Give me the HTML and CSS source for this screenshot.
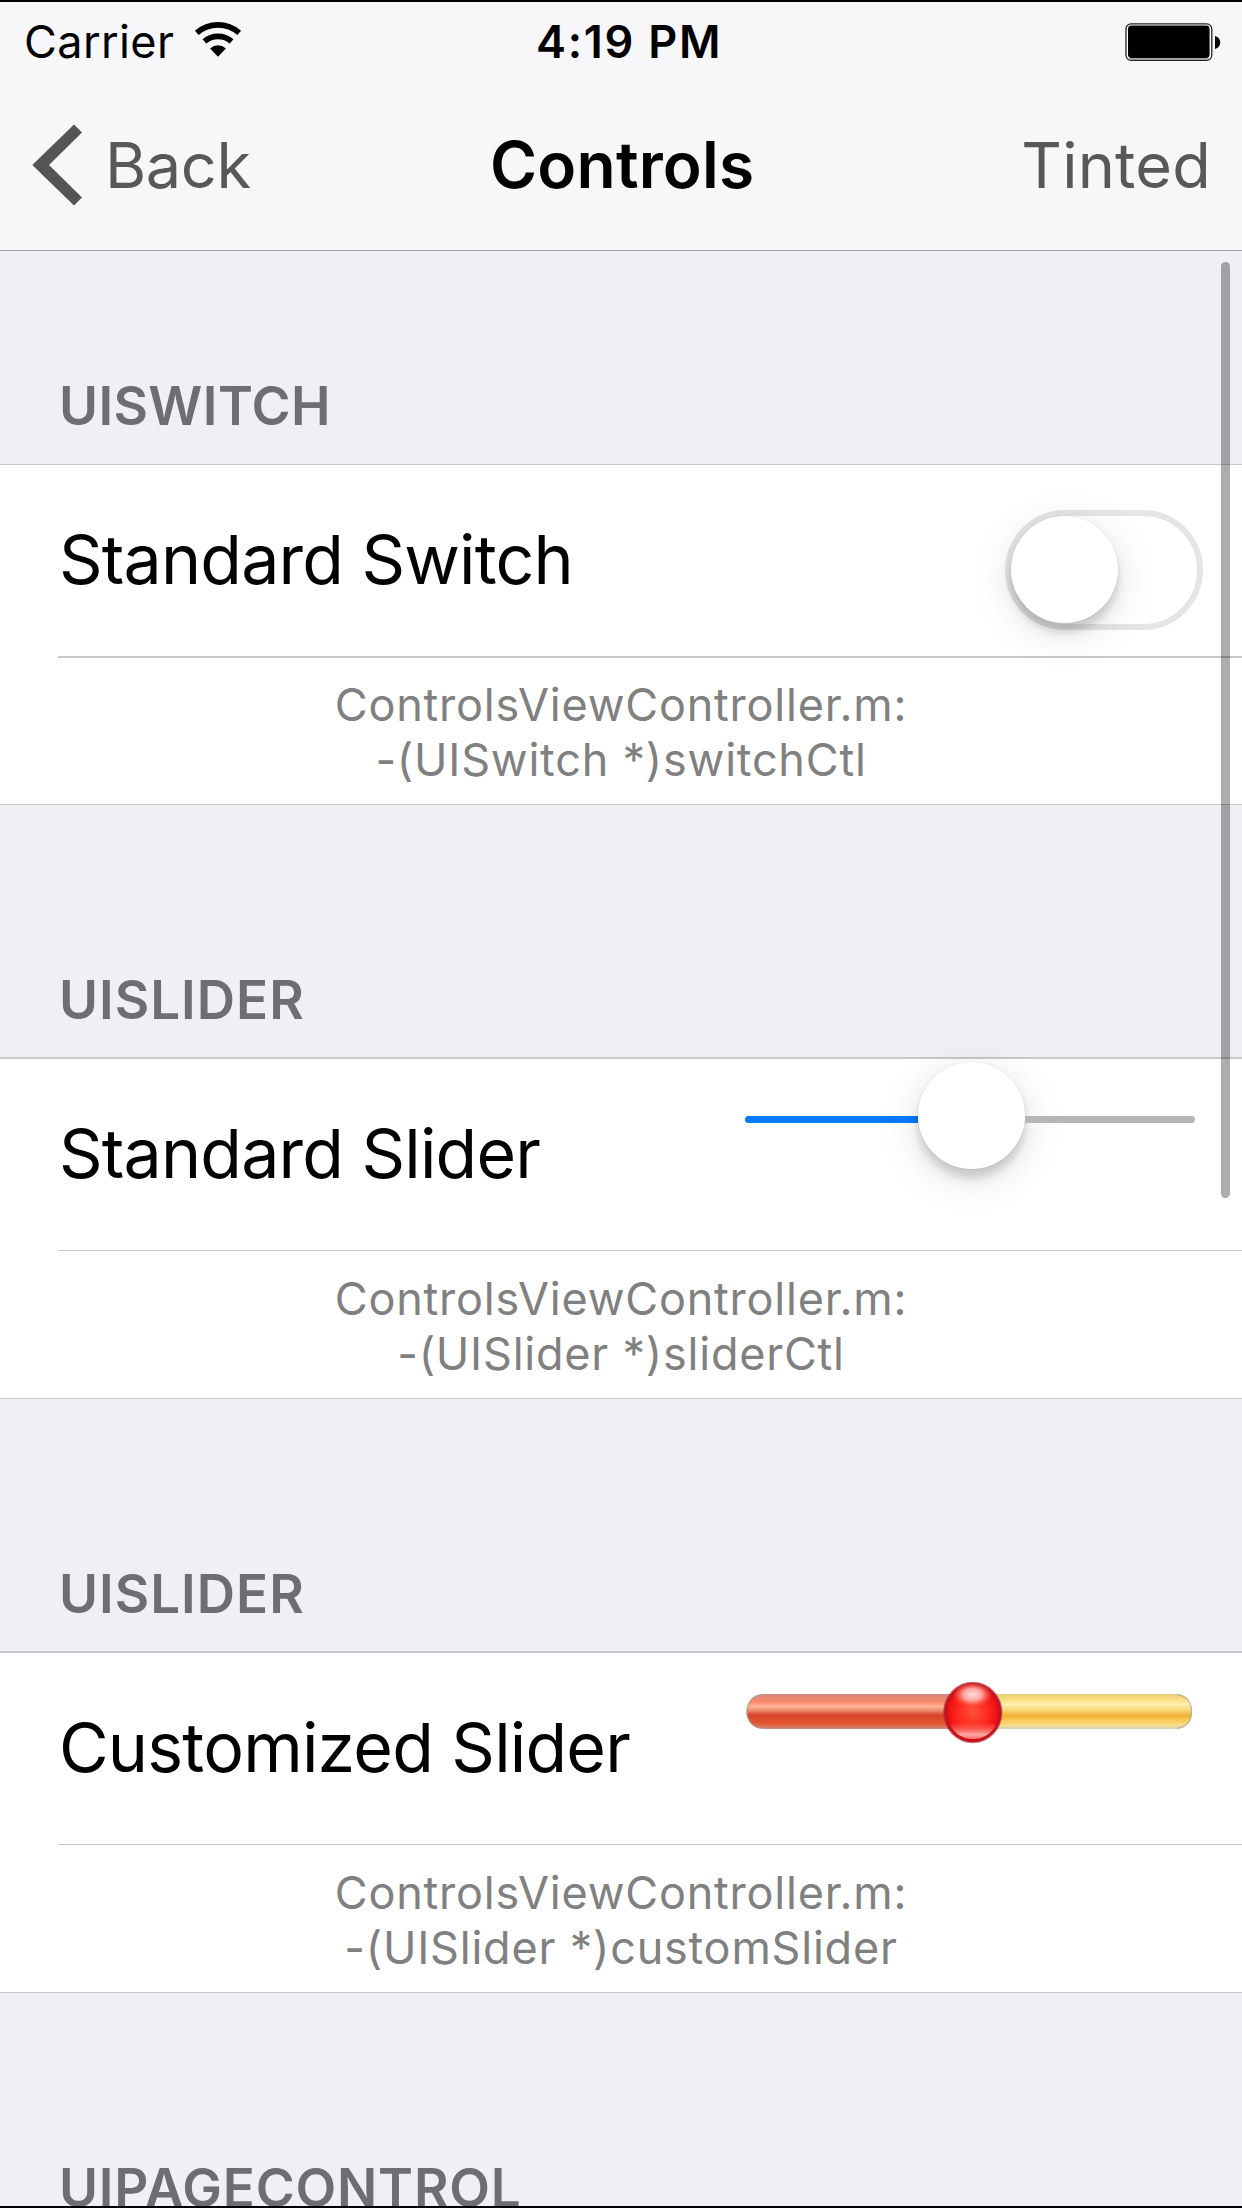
FILE: index.html
```html
<!DOCTYPE html>
<html lang="en">
<head>
<meta charset="utf-8">
<title>Controls</title>
<link rel="stylesheet" href="styles.css">
</head>
<body>
<div class="screen">
  <header class="bar">
    <div class="status">
      <div class="status-left">
        <span class="carrier">Carrier</span>
        <svg class="wifi" width="48" height="36" viewBox="-24 -36 48 36" aria-hidden="true">
          <path d="M-21.2-24.2A32.2 32.2 0 0 1 21.2-24.2M-13.6-15.6A20.7 20.7 0 0 1 13.6-15.6" fill="none" stroke="#000" stroke-width="5.7"/>
          <path d="M0-.2L-7.9-8.6A11.7 11.7 0 0 1 7.9-8.6Z"/>
        </svg>
      </div>
      <span class="time">4:19 PM</span>
      <svg class="battery" width="96" height="38" viewBox="0 0 96 38" aria-hidden="true">
        <rect x="1" y=".9" width="85.8" height="36.4" rx="5" fill="#fff" stroke="#222" stroke-width="1.3"/>
        <path d="M4 36H84" stroke="#8f8b90" stroke-width="1.4"/>
        <rect x="3" y="2.5" width="81.6" height="32.5" rx="3.4"/>
        <path d="M90 13C97 14.500 97 24.500 90 26Z"/>
      </svg>
    </div>
    <nav class="nav">
      <a class="back">
        <svg width="51" height="82" viewBox="0 0 51 82" aria-hidden="true"><path d="M42 .5L50 8.500L17 41L50 73.500L42 81.500L.3 41Z" fill="#555"/></svg>
        <span>Back</span>
      </a>
      <h1 class="title">Controls</h1>
      <a class="tinted">Tinted</a>
    </nav>
  </header>

  <main class="table">
    <section>
      <h2 class="header header-first">UISWITCH</h2>
      <div class="group group-first">
        <div class="cell">
          <span class="label">Standard Switch</span>
          <span class="switch"><span class="thumb"></span></span>
        </div>
        <p class="note">ControlsViewController.m:<br>-(UISwitch *)switchCtl</p>
      </div>
    </section>

    <section>
      <h2 class="header">UISLIDER</h2>
      <div class="group">
        <div class="cell">
          <span class="label">Standard Slider</span>
          <span class="slider"><span class="track-min"></span><span class="thumb"></span><span class="track-max"></span></span>
        </div>
        <p class="note">ControlsViewController.m:<br>-(UISlider *)sliderCtl</p>
      </div>
    </section>

    <section>
      <h2 class="header">UISLIDER</h2>
      <div class="group">
        <div class="cell">
          <span class="label">Customized Slider</span>
          <svg class="custom" width="450" height="64" viewBox="0 0 450 64" aria-hidden="true">
            <defs>
              <linearGradient id="red" x2="0" y2="1">
                <stop offset="0" stop-color="#c98a7c"/><stop offset=".1" stop-color="#e98570"/><stop offset=".24" stop-color="#fa8c70"/>
                <stop offset=".36" stop-color="#ffb496"/><stop offset=".47" stop-color="#ee8a6c"/><stop offset=".6" stop-color="#d5432c"/>
                <stop offset=".82" stop-color="#e4552f"/><stop offset=".93" stop-color="#e07050"/><stop offset="1" stop-color="#b5958a"/>
              </linearGradient>
              <linearGradient id="yellow" x2="0" y2="1">
                <stop offset="0" stop-color="#e3cf80"/><stop offset=".12" stop-color="#f7d978"/><stop offset=".3" stop-color="#fff0b0"/>
                <stop offset=".45" stop-color="#f9d97c"/><stop offset=".62" stop-color="#efb236"/><stop offset=".78" stop-color="#fbcf60"/>
                <stop offset=".9" stop-color="#f8dc90"/><stop offset="1" stop-color="#d2d0bd"/>
              </linearGradient>
              <radialGradient id="ball">
                <stop offset="0" stop-color="#ff5035"/><stop offset=".5" stop-color="#ff2a20"/><stop offset=".8" stop-color="#f31417"/><stop offset="1" stop-color="#b90c19"/>
              </radialGradient>
              <radialGradient id="shine">
                <stop offset="0" stop-color="#ffdedd"/><stop offset=".45" stop-color="#ffc0ba" stop-opacity=".85"/><stop offset="1" stop-color="#ff6a50" stop-opacity="0"/>
              </radialGradient>
              <linearGradient id="glow" x2="0" y2="1">
                <stop offset="0" stop-color="#ff5040" stop-opacity="0"/><stop offset=".75" stop-color="#ffa6a2"/><stop offset="1" stop-color="#ff7070"/>
              </linearGradient>
            </defs>
            <path d="M228 13H19C7 13 1.500 22 1.500 30.500S7 48 19 48H228Z" fill="url(#red)"/>
            <path d="M228 13H431C443 13 447 22 447 30.500S443 48 431 48H228Z" fill="url(#yellow)"/>
            <path d="M17 13.500C7 15 2 22 2 30.500S7 46 17 47.500" fill="none" stroke="#a9a099" stroke-opacity=".65" stroke-width="1.500"/>
            <path d="M432 13.500C442 15 446.500 22 446.500 30.500S442 46 432 47.500" fill="none" stroke="#aaa" stroke-opacity=".7" stroke-width="1.500"/>
            <ellipse cx="227.800" cy="31.500" rx="28.700" ry="29.800" fill="url(#ball)"/>
            <ellipse cx="227.500" cy="13.500" rx="20" ry="13" fill="url(#shine)"/>
            <path d="M205 44Q228 36 251 44Q243 58 228 58T205 44Z" fill="url(#glow)"/>
            <ellipse cx="227.800" cy="31.500" rx="28.700" ry="29.800" fill="none" stroke="#b32837" stroke-opacity=".6" stroke-width="2"/>
          </svg>
        </div>
        <p class="note">ControlsViewController.m:<br>-(UISlider *)customSlider</p>
      </div>
    </section>

    <section>
      <h2 class="header header-page">UIPAGECONTROL</h2>
    </section>
  </main>
  <div class="scrollbar"></div>
</div>
</body>
</html>
```
FILE: styles.css
```css
* { box-sizing: border-box; }

body {
  margin: 0;
  font-family: Inter, "Liberation Sans", sans-serif;
  color: #000;
  background: #efeff4;
}

h1, h2, p { margin: 0; }
svg { display: block; flex: none; }

.screen {
  position: relative;
  width: 1242px;
  height: 2208px;
  overflow: hidden;
  border-top: 2px solid #000;
  border-bottom: 2px solid #000;
}

/* Status and navigation bars */
.bar {
  height: 249px;
  background: #f7f7f9;
  border-bottom: 1px solid #a4a3a9;
}

.status {
  display: grid;
  grid-template-columns: 536px auto 1fr;
  align-items: center;
  height: 80px;
  font-size: 45px;
  line-height: 56px;
}

.status-left {
  display: flex;
  align-items: center;
  gap: 20px;
  padding-left: 24px;
}

.carrier { letter-spacing: .4px; }
.wifi { margin-top: -6px; }
.time { font-weight: 600; letter-spacing: 1.75px; }
.battery { justify-self: end; margin: -1px 21px 0 0; }

.nav {
  display: grid;
  grid-template-columns: 490px auto 1fr;
  align-items: center;
  height: 168px;
  padding-bottom: 3px;
  font-size: 64px;
  line-height: 80px;
}

.back, .tinted { color: #585858; }

.back {
  display: flex;
  align-items: center;
  gap: 22px;
  padding-left: 32px;
  font-size: 63px;
  letter-spacing: -.4px;
}

.title {
  font-size: 64px;
  font-weight: 600;
  letter-spacing: .2px;
}

.tinted {
  justify-self: end;
  padding-right: 31px;
  font-size: 63px;
  letter-spacing: .2px;
}

/* Grouped table */
.header {
  display: flex;
  align-items: flex-end;
  height: 252px;
  padding: 0 0 27px 59px;
  font-size: 53px;
  font-weight: 600;
  line-height: 60px;
  letter-spacing: 1px;
  color: #6d6d72;
}

.header-first {
  height: 213px;
  padding-bottom: 28px;
  letter-spacing: .4px;
}

.header-page { height: 254px; letter-spacing: .8px; padding-bottom: 29px; }

.group {
  height: 342px;
  background: #fff;
  border-top: 2px solid #c8c7cc;
  border-bottom: 1px solid #c8c7cc;
}

.group-first { height: 341px; border-top-width: 1px; }

.cell {
  display: flex;
  justify-content: space-between;
  align-items: flex-start;
  height: 191px;
}

.label {
  padding: 54px 0 0 59px;
  font-size: 68px;
  line-height: 80px;
  letter-spacing: -.8px;
}

.note {
  height: 148px;
  padding-top: 22px;
  font-size: 45px;
  line-height: 54.5px;
  letter-spacing: .78px;
  text-align: center;
  color: #808080;
  background: linear-gradient(#c8c7cc, #c8c7cc) 58px 0 / 100% 1px no-repeat;
}

.group-first .note { background-size: 100% 2px; }

/* Controls */
.thumb {
  flex: none;
  width: 107px;
  height: 107px;
  border-radius: 50%;
  background: #fff;
  box-shadow: 0 0 2px rgba(0, 0, 0, .1), 0 9px 9px rgba(0, 0, 0, .15), 0 9px 40px rgba(0, 0, 0, .13);
}

.switch {
  display: flex;
  width: 198px;
  height: 120px;
  margin: 45px 39px 0 0;
  border: 6.5px solid #e5e5e5;
  border-radius: 60px;
}

.slider {
  display: flex;
  align-items: center;
  width: 450px;
  height: 108px;
  margin: 2px 47px 0 0;
}

.track-min, .track-max {
  height: 7px;
  margin-top: 9px;
}

.track-min {
  width: 173px;
  border-radius: 4px 0 0 4px;
  background: #007aff;
}

.track-max {
  flex: 1;
  border-radius: 0 4px 4px 0;
  background: #b6b6b6;
}

.custom { margin: 28px 47px 0 0; }

.scrollbar {
  position: absolute;
  top: 260px;
  left: 1221px;
  width: 9px;
  height: 936px;
  border-radius: 5px;
  background: rgba(0, 0, 0, .32);
}
```
